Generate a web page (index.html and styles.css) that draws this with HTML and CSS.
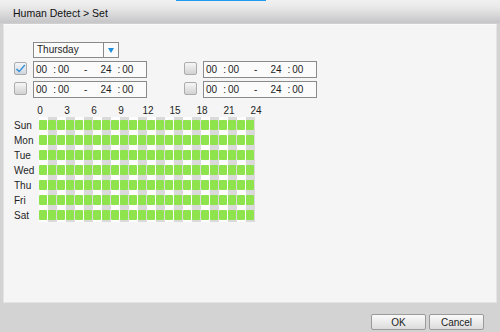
FILE: index.html
```html
<!DOCTYPE html>
<html lang="en">
<head>
  <meta charset="UTF-8" />
  <title>Human Detect &gt; Set</title>
  <link rel="stylesheet" href="styles.css">
</head>
<body>
  <div class="titlebar">
    <div class="tab-mark"></div>
    <div class="title">Human Detect &gt; Set</div>
  </div>

  <div class="panel">
    <div class="day-select">
      <span class="day-value">Thursday</span>
      <span class="day-arrow"></span>
    </div>

    <div class="slots">
      <div class="slot">
        <span class="check checked">
          <svg width="11" height="11" viewBox="0 0 11 11"><path d="M1.5 6 L4.2 8.6 L9.8 2" fill="none" stroke="#2f8fd8" stroke-width="1.4"/></svg>
        </span>
        <div class="time-box"><span>00</span><span class="colon">:</span><span>00</span><span class="dash">-</span><span>24</span><span class="colon">:</span><span>00</span></div>
      </div>
      <div class="slot">
        <span class="check"></span>
        <div class="time-box"><span>00</span><span class="colon">:</span><span>00</span><span class="dash">-</span><span>24</span><span class="colon">:</span><span>00</span></div>
      </div>
      <div class="slot">
        <span class="check"></span>
        <div class="time-box"><span>00</span><span class="colon">:</span><span>00</span><span class="dash">-</span><span>24</span><span class="colon">:</span><span>00</span></div>
      </div>
      <div class="slot">
        <span class="check"></span>
        <div class="time-box"><span>00</span><span class="colon">:</span><span>00</span><span class="dash">-</span><span>24</span><span class="colon">:</span><span>00</span></div>
      </div>
    </div>

    <div class="hours">
      <span>0</span><span>3</span><span>6</span><span>9</span><span>12</span><span>15</span><span>18</span><span>21</span><span>24</span>
    </div>
    <div id="schedule" class="schedule"></div>
  </div>

  <div class="footer">
    <button class="btn">OK</button>
    <button class="btn">Cancel</button>
  </div>

  <script>
    const days = ['Sun', 'Mon', 'Tue', 'Wed', 'Thu', 'Fri', 'Sat'];
    const schedule = document.getElementById('schedule');
    days.forEach(day => {
      const row = document.createElement('div');
      row.className = 'day-row';
      const label = document.createElement('span');
      label.className = 'day-label';
      label.textContent = day;
      row.appendChild(label);
      const cells = document.createElement('div');
      cells.className = 'cells';
      for (let h = 0; h < 24; h++) {
        const cell = document.createElement('span');
        cell.className = h % 2 ? 'cell odd' : 'cell';
        cell.appendChild(document.createElement('i'));
        cells.appendChild(cell);
      }
      row.appendChild(cells);
      schedule.appendChild(row);
    });
  </script>
</body>
</html>
```

FILE: styles.css
```css
* { box-sizing: border-box; }
html, body { margin: 0; }
body {
  width: 500px;
  height: 332px;
  overflow: hidden;
  background: #d3d3d3;
  font-family: "Liberation Sans", Arial, sans-serif;
  font-size: 10px;
  color: #1e1e1e;
}

/* Title bar */
.titlebar {
  height: 24px;
  background: linear-gradient(#f0f0f0 0, #ebebeb 25%, #d4d4d6 70%, #c6c6c8 92%, #d2d2d2 100%);
}
.tab-mark {
  width: 90px;
  height: 1px;
  margin-left: 176px;
  background: #1e9bf0;
}
.title {
  padding: 5px 0 0 13px;
  font-size: 10.5px;
  line-height: 14px;
  color: #111;
}

/* Main panel */
.panel {
  height: 279px;
  margin: 0 3px 0 3px;
  padding: 17px 0 0 10px;
  background: #f5f5f5;
  border: 1px solid #e4e4e4;
  border-top-color: #fafafa;
}

.day-select {
  display: flex;
  width: 86px;
  height: 16px;
  margin-left: 19px;
  border: 1px solid #8a8a8a;
  background: #fbfbfb;
}
.day-value {
  flex: 1;
  padding-left: 3px;
  line-height: 14px;
  border-right: 1px solid #8a8a8a;
}
.day-arrow {
  width: 14px;
  display: flex;
  align-items: center;
  justify-content: center;
}
.day-arrow::before {
  content: "";
  border-left: 3px solid transparent;
  border-right: 3px solid transparent;
  border-top: 5px solid #1c8fe0;
}

.slots {
  display: grid;
  grid-template-columns: 170px 140px;
  row-gap: 3px;
  margin-top: 3px;
}
.slot {
  display: flex;
  align-items: flex-start;
  gap: 6px;
  height: 17px;
}
.check {
  display: flex;
  align-items: center;
  justify-content: center;
  width: 13px;
  height: 13px;
  margin-top: 1px;
  border: 1px solid #acacac;
  border-radius: 2px;
  background: linear-gradient(#f6f6f6, #d2d2d2);
}
.check.checked { background: linear-gradient(#f3f6fa, #cfd6de); }
.time-box {
  display: flex;
  align-items: center;
  width: 114px;
  height: 17px;
  padding-left: 2px;
  border: 1px solid #8a8a8a;
  background: #fbfbfb;
}
.colon { margin: 0 2px 0 6px; }
.dash { margin: 0 13px 0 15px; }

/* Schedule grid */
.hours {
  display: flex;
  height: 13px;
  margin-top: 6px;
  padding-left: 12.5px;
  line-height: 13px;
}
.hours span {
  width: 27px;
  text-align: center;
}
.day-row {
  display: flex;
  height: 15px;
}
.day-label {
  width: 25px;
  line-height: 15px;
  padding-top: 1px;
}
.cells {
  display: flex;
  background: #fdfdfd;
}
.cell {
  width: 9px;
  height: 15px;
  padding: 3px 1px 2px 0;
  background: #fdfdfd;
}
.cell.odd { background: #dadada; }
.cell i {
  display: block;
  width: 8px;
  height: 10px;
  border-radius: 1px;
  background: #8fe34c;
}

/* Footer */
.footer {
  display: flex;
  justify-content: flex-end;
  gap: 3px;
  padding: 11px 16px 0 0;
}
.btn {
  width: 55px;
  height: 16px;
  padding: 0;
  border: 1px solid #9a9a9a;
  border-radius: 2px;
  background: linear-gradient(#fafafa, #dcdcdc);
  font-family: "Liberation Sans", Arial, sans-serif;
  font-size: 10px;
  color: #222;
}
```
